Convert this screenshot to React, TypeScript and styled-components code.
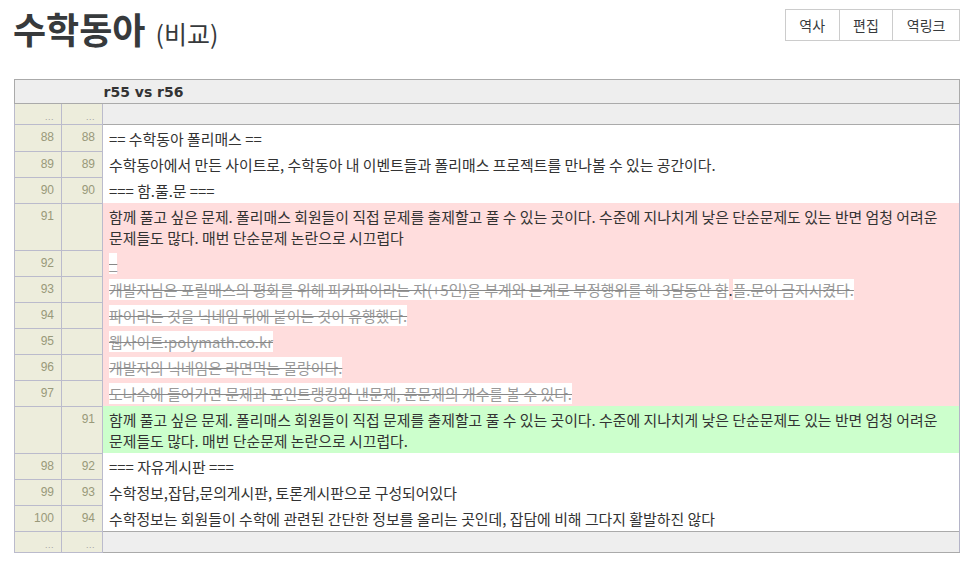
import styled, { createGlobalStyle } from 'styled-components';

const GlobalStyle = createGlobalStyle`
    html, body {
        margin: 0;
        padding: 0;
        background: #fff;
    }
    body {
        font-family: "Noto Sans CJK KR", "Noto Sans", sans-serif;
        color: #373a3c;
    }
`;

const Page = styled.div`
    padding: 0 10px 0 14px;
`;

const TitleBar = styled.div`
    display: flex;
    justify-content: space-between;
    align-items: flex-start;
    height: 79px;
`;

const Title = styled.h1`
    margin: 0 0 0 -1px;
    font-size: 36px;
    font-weight: 700;
    line-height: 56px;
    color: #373a3c;
`;

const SubTitle = styled.small`
    font-size: 25px;
    font-weight: 400;
    margin-left: 10px;
`;

const ButtonGroup = styled.div`
    display: flex;
    margin-top: 9px;
    border: 1px solid #ccc;
`;

const ToolButton = styled.a`
    display: flex;
    align-items: center;
    height: 30px;
    padding: 0 13.5px;
    font-size: 14px;
    color: #373a3c;
    & + & {
        border-left: 1px solid #ccc;
    }
`;

const DiffTable = styled.table`
    width: 100%;
    border-collapse: collapse;
    border: 1px solid #aaa;
    border-bottom-color: #b4b4c8;
    table-layout: fixed;
`;

const HeadCell = styled.th`
    background: #eee;
    text-align: left;
    padding: 0 0 0 1px;
    height: 23px;
    font-family: "DejaVu Sans", sans-serif;
    font-size: 14px;
    font-weight: 700;
    color: #333;
    border-bottom: 1px solid #aaa;
`;

const GapRow = styled.tr`
    height: 20px;
`;

const NumCell = styled.td`
    background: #ededdc;
    border: 1px solid #bbbbcc;
    text-align: right;
    vertical-align: top;
    padding: 5px 7px 0 0;
    font-family: "Liberation Sans", Arial, sans-serif;
    font-size: 12px;
    color: #99997a;
    line-height: 14px;
`;

const DotsCell = styled(NumCell)`
    padding: 6px 7px 0 0;
    font-size: 9px;
    color: #a0a0a0;
    letter-spacing: 0.5px;
`;

type Kind = 'same' | 'del' | 'add' | 'gap';

const bg: Record<Kind, string> = {
    same: '#fff',
    del: '#ffdddd',
    add: '#ccffcc',
    gap: '#eee',
};

const TextCell = styled.td<{ $kind: Kind }>`
    background: ${p => bg[p.$kind]};
    padding: 3px 14px 2px 6px;
    font-size: 14.9px;
    line-height: 21px;
    color: #333;
    word-break: keep-all;
    border-right: 1px solid #b4b4c8;
    ${p => p.$kind === 'gap' ? 'padding: 0; border-top: 1px solid #aaa; border-bottom: 1px solid #aaa;' : ''}
`;

const Struck = styled.del`
    background: #fff;
    color: #999;
    text-decoration: line-through;
    text-decoration-color: #888;
`;

type Line = {
    a?: number;
    b?: number;
    kind: Exclude<Kind, 'gap'>;
    text: string[];
};

const lines: Line[] = [
    { a: 88, b: 88, kind: 'same', text: ['== 수학동아 폴리매스 =='] },
    { a: 89, b: 89, kind: 'same', text: ['수학동아에서 만든 사이트로, 수학동아 내 이벤트들과 폴리매스 프로젝트를 만나볼 수 있는 공간이다.'] },
    { a: 90, b: 90, kind: 'same', text: ['=== 함.풀.문 ==='] },
    { a: 91, kind: 'del', text: ['함께 풀고 싶은 문제. 폴리매스 회원들이 직접 문제를 출제할고 풀 수 있는 곳이다. 수준에 지나치게 낮은 단순문제도 있는 반면 엄청 어려운 문제들도 많다. 매번 단순문제 논란으로 시끄럽다'] },
    { a: 92, kind: 'del', text: ['_'] },
    { a: 93, kind: 'del', text: ['개발자님은 포릴매스의 평화를 위해 피카파이라는 자(+5인)을 부계와 본계로 부정행위를 해 3달동안 함', '.', '플.문이 금지시켰다.'] },
    { a: 94, kind: 'del', text: ['파이라는 것을 닉네임 뒤에 붙이는 것이 유행했다.'] },
    { a: 95, kind: 'del', text: ['웹사이트:polymath.co.kr'] },
    { a: 96, kind: 'del', text: ['개발자의 닉네임은 라면먹는 몰랑이다.'] },
    { a: 97, kind: 'del', text: ['도나수에 들어가면 문제과 포인트랭킹와 낸문제, 푼문제의 개수를 볼 수 있다.'] },
    { b: 91, kind: 'add', text: ['함께 풀고 싶은 문제. 폴리매스 회원들이 직접 문제를 출제할고 풀 수 있는 곳이다. 수준에 지나치게 낮은 단순문제도 있는 반면 엄청 어려운 문제들도 많다. 매번 단순문제 논란으로 시끄럽다.'] },
    { a: 98, b: 92, kind: 'same', text: ['=== 자유게시판 ==='] },
    { a: 99, b: 93, kind: 'same', text: ['수학정보,잡담,문의게시판, 토론게시판으로 구성되어있다'] },
    { a: 100, b: 94, kind: 'same', text: ['수학정보는 회원들이 수학에 관련된 간단한 정보를 올리는 곳인데, 잡담에 비해 그다지 활발하진 않다'] },
];

function LineText({ line }: { line: Line }) {
    if (line.kind === 'del' && line.a !== 91) {
        return (
            <>
                {line.text.map((t, i) => (i % 2 === 1 ? <span key={i}>{t}</span> : <Struck key={i}>{t}</Struck>))}
            </>
        );
    }
    return <>{line.text.join('')}</>;
}

export default function App() {
    return (
        <Page>
            <GlobalStyle />
            <TitleBar>
                <Title>
                    수학동아<SubTitle>(비교)</SubTitle>
                </Title>
                <ButtonGroup>
                    <ToolButton>역사</ToolButton>
                    <ToolButton>편집</ToolButton>
                    <ToolButton>역링크</ToolButton>
                </ButtonGroup>
            </TitleBar>
            <DiffTable>
                <colgroup>
                    <col style={{ width: 47 }} />
                    <col style={{ width: 41 }} />
                    <col />
                </colgroup>
                <thead>
                    <tr>
                        <HeadCell colSpan={2} />
                        <HeadCell>r55 vs r56</HeadCell>
                    </tr>
                </thead>
                <tbody>
                    <GapRow>
                        <DotsCell>...</DotsCell>
                        <DotsCell>...</DotsCell>
                        <TextCell $kind="gap" />
                    </GapRow>
                    {lines.map((line, i) => (
                        <tr key={i}>
                            <NumCell>{line.a ?? ''}</NumCell>
                            <NumCell>{line.b ?? ''}</NumCell>
                            <TextCell $kind={line.kind}>
                                <LineText line={line} />
                            </TextCell>
                        </tr>
                    ))}
                    <GapRow>
                        <DotsCell>...</DotsCell>
                        <DotsCell>...</DotsCell>
                        <TextCell $kind="gap" />
                    </GapRow>
                </tbody>
            </DiffTable>
        </Page>
    );
}
